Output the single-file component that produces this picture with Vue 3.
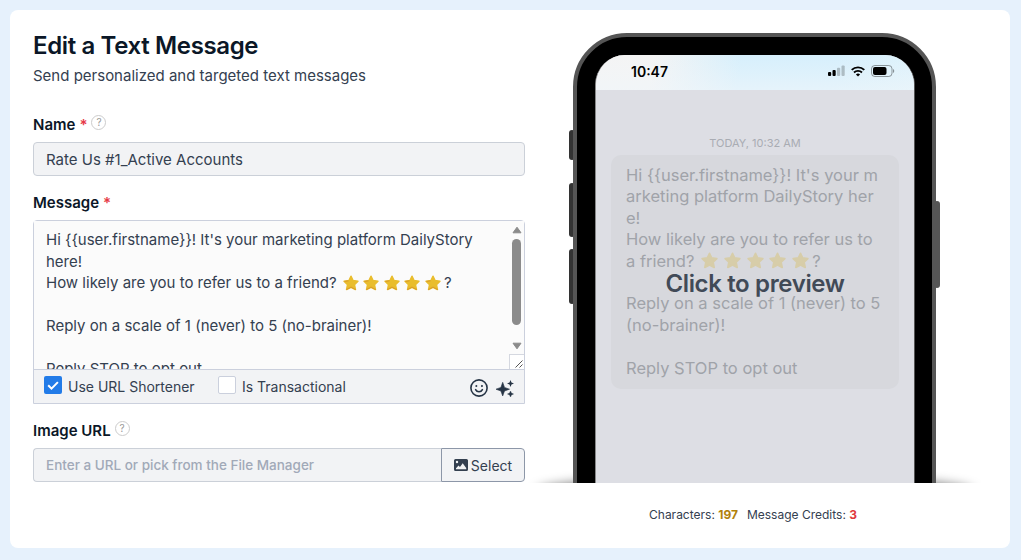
<template>
  <div class="page">
    <main class="card">
      <section class="editor">
        <h1 class="title">Edit a Text Message</h1>
        <p class="subtitle">Send personalized and targeted text messages</p>

        <!-- Name -->
        <div class="label-row name-label">
          <label>Name</label>
          <span class="required">*</span>
          <span class="help">?</span>
        </div>
        <input class="text-input" v-model="name" />

        <!-- Message -->
        <div class="label-row">
          <label>Message</label>
          <span class="required">*</span>
        </div>
        <div class="message-box">
          <div class="message-area">
            <div class="message-text">
              <p v-for="(line, i) in lines" :key="i">
                {{ line.text
                }}<template v-if="line.stars"
                  ><svg v-for="n in line.stars" :key="n" class="star" viewBox="0 0 16 16">
                    <path :d="starPath" fill="#e9bd2d" stroke="#e9bd2d" stroke-width="1.6" stroke-linejoin="round" />
                    <path d="M3.6 14.4 8 12.1l4.4 2.3M5.2 5.9l-3.4.5" fill="none" stroke="#d99a2b" stroke-width="1" stroke-linecap="round" />
                  </svg>?</template
                >
              </p>
            </div>
            <div class="scrollbar">
              <svg class="arrow" viewBox="0 0 10 8"><path d="M5 1.2 9 6.8H1z" fill="#8b8b8b" stroke="#8b8b8b" stroke-linejoin="round" /></svg>
              <span class="thumb"></span>
              <svg class="arrow arrow-down" viewBox="0 0 10 8"><path d="M5 6.8 9 1.2H1z" fill="#8b8b8b" stroke="#8b8b8b" stroke-linejoin="round" /></svg>
              <span class="resizer">
                <svg viewBox="0 0 8 8"><path d="M.5 7.5l7-7M4.5 7.5l3-3" stroke="#555" stroke-width="1" /></svg>
              </span>
            </div>
          </div>
          <div class="toolbar">
            <button class="check" :class="{ checked: shorten }" @click="shorten = !shorten">
              <svg v-if="shorten" viewBox="0 0 18 18"><path d="M4.2 9.3l3.3 3.3 6.4-6.5" fill="none" stroke="#fff" stroke-width="2" /></svg>
            </button>
            <span class="check-label first">Use URL Shortener</span>
            <button class="check" :class="{ checked: transactional }" @click="transactional = !transactional"></button>
            <span class="check-label">Is Transactional</span>
            <!-- Emoji and AI actions -->
            <svg class="tool-icon smile" viewBox="0 0 18 18" fill="none" stroke="#263445" stroke-width="1.6" stroke-linecap="round">
              <circle cx="9" cy="9" r="8.1" />
              <path d="M5.6 10.6c.7 1.4 2 2.2 3.4 2.2s2.7-.8 3.4-2.2" />
              <circle cx="6.2" cy="7" r=".5" fill="#263445" stroke-width="1" />
              <circle cx="11.8" cy="7" r=".5" fill="#263445" stroke-width="1" />
            </svg>
            <svg class="tool-icon sparkles" viewBox="0 0 18 18" fill="#263445">
              <path d="M6.7 3.3 8.5 8.4l5 1.8-5 1.8-1.8 5-1.8-5-5-1.8 5-1.8z" stroke="#263445" stroke-width=".6" stroke-linejoin="round" />
              <path d="M14.5 1l1 2.5 2.5 1-2.5 1-1 2.5-1-2.5-2.5-1 2.5-1z" />
              <path d="M14.5 12l.9 2.1 2.1.9-2.1.9-.9 2.1-.9-2.1-2.1-.9 2.1-.9z" stroke="#263445" stroke-width=".4" />
            </svg>
          </div>
        </div>

        <!-- Image -->
        <div class="label-row">
          <label>Image URL</label>
          <span class="help">?</span>
        </div>
        <div class="input-group">
          <input class="text-input url-input" v-model="imageUrl" placeholder="Enter a URL or pick from the File Manager" />
          <button class="select-button">
            <svg viewBox="0 0 14 12">
              <path fill-rule="evenodd" fill="#344050" d="M1.5 0h11A1.5 1.5 0 0 1 14 1.5v9a1.5 1.5 0 0 1-1.5 1.5h-11A1.5 1.5 0 0 1 0 10.5v-9A1.5 1.5 0 0 1 1.5 0zM3 1.8a1.2 1.2 0 1 0 0 2.4 1.2 1.2 0 0 0 0-2.4zM2 10.2h10.2V9L8.7 4.2 6 8 4.5 6.5 2 9.2z" />
            </svg>
            Select
          </button>
        </div>
      </section>

      <section class="preview">
        <div class="stage">
          <div class="ground-shadow"></div>
          <span v-for="side in sideButtons" :key="side" class="side-button" :class="side"></span>
          <div class="phone">
            <div class="screen">
              <div class="status-bar">
                <span class="time">10:47</span>
                <svg class="signal" viewBox="0 0 17 12">
                  <rect x="0" y="7" width="3.2" height="4" rx="1" />
                  <rect x="4.5" y="5" width="3.2" height="6" rx="1" />
                  <rect x="9" y="2.8" width="3.2" height="8.2" rx="1" opacity=".22" />
                  <rect x="13.5" y=".5" width="3.2" height="10.5" rx="1" opacity=".22" />
                </svg>
                <svg class="wifi" viewBox="0 0 14 11" fill="none" stroke="#000" stroke-width="1.9">
                  <path d="M.7 3.9a9 9 0 0 1 12.6 0M3 6.5a5.8 5.8 0 0 1 8 0" />
                  <path d="M7 10.6 4.9 8.5a3 3 0 0 1 4.2 0z" fill="#000" stroke="none" />
                </svg>
                <svg class="battery" viewBox="0 0 24 12">
                  <rect x=".5" y=".5" width="20.5" height="11" rx="3.3" fill="none" stroke="#000" stroke-opacity=".38" />
                  <rect x="2" y="2" width="13.5" height="8" rx="2" />
                  <path d="M22 4v4c1.7-.6 1.7-3.4 0-4z" opacity=".4" />
                </svg>
              </div>
              <div class="thread">
                <div class="stamp">TODAY, 10:32 AM</div>
                <div class="bubble">
                  <p v-for="(line, i) in previewLines" :key="i">
                    {{ line.text
                    }}<template v-if="line.stars"
                      ><svg v-for="n in line.stars" :key="n" class="star" viewBox="0 0 16 16">
                        <path :d="starPath" fill="#d7cda9" stroke="#d7cda9" stroke-width="1.6" stroke-linejoin="round" />
                      </svg>?</template
                    >
                  </p>
                </div>
                <div class="overlay">Click to preview</div>
              </div>
            </div>
          </div>
        </div>
        <div class="counts">
          <span>Characters: <b class="chars">197</b></span>
          <span>Message Credits: <b class="credits">3</b></span>
        </div>
      </section>
    </main>
  </div>
</template>

<script setup>
import { ref } from "vue";

const name = ref("Rate Us #1_Active Accounts");
const imageUrl = ref("");
const shorten = ref(true);
const transactional = ref(false);

const starPath =
  "M8 1.3 10 5.6 14.9 6.2 11.4 9.6 12.4 14.5 8 12.2 3.6 14.5 4.6 9.6 1.1 6.2 6 5.6z";

const sideButtons = ["mute", "volume-up", "volume-down", "power"];

const lines = [
  { text: "Hi {{user.firstname}}! It's your marketing platform DailyStory" },
  { text: "here!" },
  { text: "How likely are you to refer us to a friend?", stars: 5 },
  { text: "" },
  { text: "Reply on a scale of 1 (never) to 5 (no-brainer)!" },
  { text: "" },
  { text: "Reply STOP to opt out" },
];

// The phone wraps the same message at its own width
const previewLines = [
  { text: "Hi {{user.firstname}}! It's your m" },
  { text: "arketing platform DailyStory her" },
  { text: "e!" },
  { text: "How likely are you to refer us to" },
  { text: "a friend?", stars: 5 },
  { text: "" },
  { text: "Reply on a scale of 1 (never) to 5" },
  { text: "(no-brainer)!" },
  { text: "" },
  { text: "Reply STOP to opt out" },
];
</script>

<style>
body {
  background-color: #e6f1fc;
}
</style>

<style scoped>
* {
  box-sizing: border-box;
}
.page {
  padding: 10px 11px 12px 10px;
  font-family: Inter, "Liberation Sans", sans-serif;
  color: #344050;
}
.card {
  display: flex;
  height: 538px;
  padding: 23px 20px 0 23px;
  background-color: #fff;
  border-radius: 8px;
}
.editor {
  flex: none;
  width: 492px;
}
p {
  margin: 0;
}
button {
  font-family: inherit;
  padding: 0;
}
.title {
  margin: 0;
  font-size: 24px;
  line-height: 26px;
  font-weight: 600;
  letter-spacing: -0.36px;
  color: #0b1727;
}
.subtitle {
  margin-top: 6px;
  font-size: 15px;
  line-height: 22px;
}
.label-row {
  display: flex;
  align-items: center;
  height: 22px;
  margin: 15px 0 7px;
  font-size: 15px;
  font-weight: 600;
  color: #0b1727;
}
.name-label {
  margin-top: 26px;
}
.required {
  margin-left: 4px;
  color: #e63946;
}
.help {
  width: 15px;
  height: 15px;
  margin: -4px 0 0 4px;
  border: 1px solid #ccc;
  border-radius: 50%;
  font-size: 10px;
  line-height: 13px;
  font-weight: 400;
  text-align: center;
  color: #999;
}
.text-input {
  display: block;
  width: 100%;
  height: 34px;
  padding: 0 12px;
  border: 1px solid #cbd0d8;
  border-radius: 4px;
  background-color: #f2f3f5;
  font-family: inherit;
  font-size: 15px;
  color: #344050;
  outline: none;
}
.message-box {
  height: 184px;
  border: 1px solid #cbd0dd;
  border-radius: 4px 4px 0 0;
}
.message-area {
  display: flex;
  height: 148px;
  background-color: #fbfbfb;
  overflow: hidden;
}
.message-text {
  flex: 1;
  padding: 8.4px 0 0 12px;
  font-size: 15px;
  line-height: 21.45px;
  white-space: nowrap;
}
.message-text p {
  height: 21.45px;
}
.star {
  width: 16px;
  height: 16px;
  margin: -4px 0 -4px 4.6px;
  vertical-align: 1.5px;
}
.message-text .star:first-of-type {
  margin-left: 6px;
}
.message-text .star:last-of-type {
  margin-right: 3px;
}
.scrollbar {
  display: flex;
  flex-direction: column;
  align-items: center;
  width: 15px;
  padding-top: 5px;
}
.arrow {
  width: 10px;
  height: 8px;
}
.thumb {
  width: 9px;
  height: 86px;
  margin-top: 5px;
  border-radius: 5px;
  background-color: #8b8b8b;
}
.arrow-down {
  margin-top: 17px;
}
.resizer {
  display: flex;
  align-items: flex-end;
  justify-content: flex-end;
  width: 15px;
  height: 15px;
  margin-top: auto;
  padding: 0 1px 1px 0;
  border: 1px solid #d5d8e0;
  border-width: 1px 0 0 1px;
  background-color: #fff;
}
.resizer svg {
  width: 8px;
  height: 8px;
}
.toolbar {
  display: flex;
  align-items: center;
  height: 34px;
  padding: 0 10px 3px 10px;
  border-top: 1px solid #cbd0dd;
  background-color: #f2f3f5;
}
.check {
  width: 18px;
  height: 18px;
  border: 1px solid #cbd0dd;
  border-radius: 2px;
  background-color: #fff;
}
.check.checked {
  border: none;
  background-color: #227be8;
}
.check svg {
  display: block;
}
.check-label {
  margin-left: 6px;
  padding-top: 3px;
  font-size: 14px;
}
.check-label.first {
  width: 150px;
}
.tool-icon {
  width: 18px;
  height: 18px;
  margin-top: 5px;
}
.smile {
  margin-left: auto;
}
.sparkles {
  margin-left: 8px;
}
.input-group {
  display: flex;
}
.url-input {
  flex: 1;
  border-right: none;
  border-radius: 4px 0 0 4px;
  font-size: 13.5px;
}
.url-input::placeholder {
  color: #a1a9b8;
  font-weight: 500;
}
.select-button {
  display: flex;
  align-items: center;
  justify-content: center;
  gap: 3px;
  width: 84px;
  height: 34px;
  border: 1px solid #8d97a8;
  border-radius: 0 4px 4px 0;
  background-color: #f2f3f5;
  font-size: 14px;
  color: #344050;
}
.select-button svg {
  width: 14px;
  height: 12px;
}
.preview {
  flex: none;
  width: 456px;
}
.stage {
  position: relative;
  height: 450px;
  padding-left: 48px;
  overflow: hidden;
}
.ground-shadow {
  position: absolute;
  left: 12px;
  bottom: -24px;
  width: 436px;
  height: 30px;
  border-radius: 50%;
  background-color: rgba(0, 0, 0, 0.6);
  filter: blur(6px);
}
.phone {
  position: relative;
  width: 363px;
  height: 480px;
  padding: 18px 17px 0 18px;
  border: 4px solid #555;
  border-radius: 54px 54px 0 0;
  background-color: #000;
}
.side-button {
  position: absolute;
  left: 44px;
  width: 6px;
  border-radius: 3px;
  background-color: #333;
}
.mute {
  top: 97px;
  height: 30px;
}
.volume-up {
  top: 150px;
  height: 54px;
}
.volume-down {
  top: 216px;
  height: 55px;
}
.power {
  left: 409px;
  top: 168px;
  height: 87px;
  background-color: #555;
}
.screen {
  width: 320px;
  height: 460px;
  border-left: 1px solid #888;
  border-right: 1px solid #555;
  border-radius: 30px 30px 0 0;
  background-color: #dddee4;
  overflow: hidden;
}
.status-bar {
  display: flex;
  align-items: center;
  height: 35px;
  padding: 0 19px 3px 35px;
  background: linear-gradient(to bottom, rgba(255, 255, 255, 0), rgba(240, 246, 250, 0.6)),
    linear-gradient(100deg, #f4f4f4 18%, #d6effc 45%, #d6effc 75%, #def2fb);
}
.time {
  flex: 1;
  font-size: 14px;
  font-weight: 600;
  color: #000;
}
.signal {
  width: 17px;
  height: 12px;
}
.wifi {
  width: 14px;
  height: 11px;
  margin-left: 6px;
}
.battery {
  width: 24px;
  height: 12px;
  margin-left: 6px;
}
.thread {
  position: relative;
  padding: 46px 15px 0;
}
.stamp {
  height: 19px;
  font-size: 11px;
  line-height: 14px;
  text-align: center;
  color: #a9acb3;
}
.bubble {
  height: 234px;
  padding: 10px 0 0 15px;
  border-radius: 10px;
  background-color: #d7d8dd;
  font-size: 16.5px;
  line-height: 21.4px;
  white-space: nowrap;
  color: #a0a3a9;
}
.bubble p {
  height: 21.4px;
}
.bubble .star {
  width: 17px;
  height: 17px;
  margin-left: 5.7px;
}
.bubble .star:first-of-type {
  margin-left: 7px;
}
.bubble .star:last-of-type {
  margin-right: 3px;
}
.overlay {
  position: absolute;
  left: 0;
  right: 0;
  top: 179px;
  font-size: 24px;
  line-height: 30px;
  font-weight: 600;
  letter-spacing: -0.36px;
  text-align: center;
  color: #414a57;
}
.counts {
  display: flex;
  justify-content: center;
  gap: 9px;
  margin-top: 24px;
  font-size: 12px;
  line-height: 16px;
}
.chars {
  color: #b1810b;
}
.credits {
  color: #e0393e;
}
</style>
